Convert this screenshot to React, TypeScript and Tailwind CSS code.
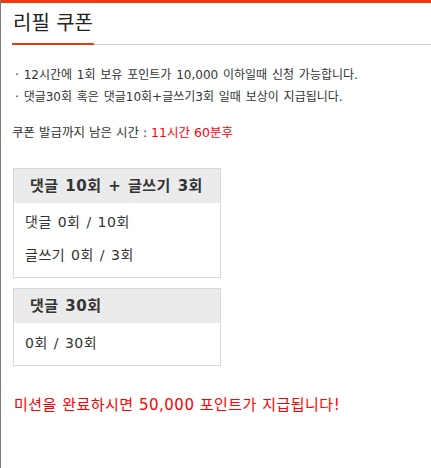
export default function App() {
  const font = { fontFamily: '"DejaVu Sans", "Noto Sans CJK KR", sans-serif' };
  return (
    <div className="w-[431px] h-[468px] bg-white border-l border-[#7a7a7a] overflow-hidden" style={font}>
      <div className="h-[3px] bg-[#ee3a0c]" />
      <div className="pl-[11px] pt-[6px]">
        <div className="flex items-end">
          <div className="border-b-2 border-[#ee3a0c] pb-[6px] whitespace-nowrap">
            <h1 className="text-[20px] leading-[28px] text-[#222] px-[1px]">리필 쿠폰</h1>
          </div>
          <div className="flex-1 border-b border-[#cccccc]" />
        </div>
        <ul className="mt-[19px] pl-[3px] text-[12px] leading-[22px] text-[#333] whitespace-nowrap [word-spacing:1px]">
          <li>· 12시간에 1회 보유 포인트가 10,000 이하일때 신청 가능합니다.</li>
          <li>· 댓글30회 혹은 댓글10회+글쓰기3회 일때 보상이 지급됩니다.</li>
        </ul>
        <p className="mt-[15px] text-[12.5px] leading-[20px] text-[#333] whitespace-nowrap">
          쿠폰 발급까지 남은 시간 : <span className="text-[#ff0000]">11시간 60분후</span>
        </p>
        <div className="ml-[1px] mt-[25px] w-[208px] border border-[#d9d9d9]">
          <div className="h-[34px] bg-[#ebebeb] flex items-center pl-[16px] text-[15px] font-bold text-[#333] whitespace-nowrap tracking-[0.5px] [word-spacing:1px]">
            댓글 10회 + 글쓰기 3회
          </div>
          <div className="px-[11px] pt-[3px] pb-[5px] text-[14px] text-[#333] leading-[33px] tracking-[0.5px] [word-spacing:1px]">
            <div>댓글 0회 / 10회</div>
            <div>글쓰기 0회 / 3회</div>
          </div>
        </div>
        <div className="ml-[1px] mt-[10px] w-[208px] border border-[#d9d9d9]">
          <div className="h-[34px] bg-[#ebebeb] flex items-center pl-[16px] text-[15px] font-bold text-[#333] tracking-[0.5px] [word-spacing:1px]">
            댓글 30회
          </div>
          <div className="px-[11px] pt-[7px] pb-[9px] text-[14px] text-[#333] leading-[26px] tracking-[0.5px] [word-spacing:1px]">
            <div>0회 / 30회</div>
          </div>
        </div>
        <p className="mt-[29px] ml-[2px] text-[15px] leading-[20px] text-[#ff0000] whitespace-nowrap tracking-[0.5px]">
          미션을 완료하시면 50,000 포인트가 지급됩니다!
        </p>
      </div>
    </div>
  );
}
